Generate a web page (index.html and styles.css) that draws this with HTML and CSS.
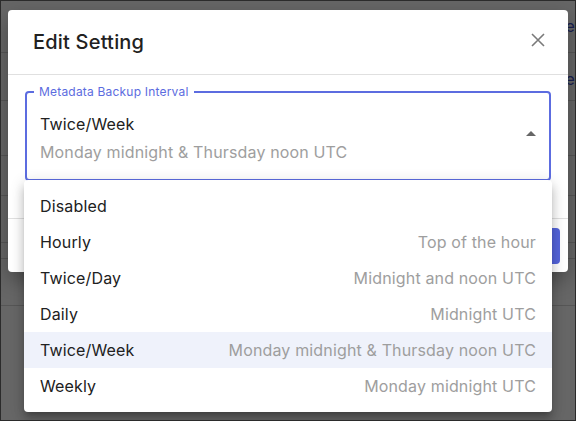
FILE: index.html
```html
<!DOCTYPE html>
<html>
<head>
<meta charset="utf-8">
<link rel="stylesheet" href="styles.css">
</head>
<body>
<div class="screen">
  <div class="page">
    <div class="row r1"><span class="link">e</span></div>
    <div class="row r2"><span class="link">e</span></div>
    <div class="row r3"></div>
    <div class="row r4"></div>
    <div class="row r5"></div>
    <div class="row r6"></div>
    <div class="row r7"></div>
  </div>
  <div class="backdrop"></div>

  <div class="dialog">
    <div class="dialog-header">
      <h2 class="dialog-title">Edit Setting</h2>
      <svg class="close" width="14" height="14" viewBox="0 0 14 14">
        <path d="M1 1 L13 13 M13 1 L1 13" stroke="#7a7a7a" stroke-width="1.6" fill="none"/>
      </svg>
    </div>
    <div class="dialog-body">
      <div class="field">
        <span class="field-label">Metadata Backup Interval</span>
        <div class="field-text">
          <div class="field-value">Twice/Week</div>
          <div class="field-sub">Monday midnight &amp; Thursday noon UTC</div>
        </div>
        <span class="caret"></span>
      </div>
    </div>
    <div class="dialog-footer">
      <div class="btn"></div>
    </div>
  </div>

  <div class="menu">
    <div class="item"><span class="name">Disabled</span><span class="desc"></span></div>
    <div class="item"><span class="name">Hourly</span><span class="desc">Top of the hour</span></div>
    <div class="item"><span class="name">Twice/Day</span><span class="desc">Midnight and noon UTC</span></div>
    <div class="item"><span class="name">Daily</span><span class="desc">Midnight UTC</span></div>
    <div class="item selected"><span class="name">Twice/Week</span><span class="desc">Monday midnight &amp; Thursday noon UTC</span></div>
    <div class="item"><span class="name">Weekly</span><span class="desc">Monday midnight UTC</span></div>
  </div>
</div>
</body>
</html>
```

FILE: styles.css
```css
* { box-sizing: border-box; }
html, body { margin: 0; padding: 0; }
body {
  font-family: Inter, "Noto Sans", "Liberation Sans", sans-serif;
  letter-spacing: 0.15px;
  width: 576px;
  height: 421px;
  overflow: hidden;
}
.screen {
  position: relative;
  width: 576px;
  height: 421px;
  background: #ffffff;
  border: 1px solid #2b2b2b;
  overflow: hidden;
}
.page { display: flex; flex-direction: column; }
.row {
  border-bottom: 1px solid #d6d6d6;
  display: flex;
  justify-content: flex-end;
  align-items: center;
  font-size: 16px;
}
.r1 { height: 52px; align-items: flex-end; }
.r2 { height: 48px; align-items: flex-start; }
.r3 { height: 55px; }
.r4 { height: 40px; }
.r5 { height: 47px; }
.r6 { height: 16px; }
.r7 { height: 47px; }
.link { color: #3f51c8; margin-right: 0; line-height: 20px; }
.r1 .link { margin-bottom: 16px; }
.r2 .link { margin-top: 16px; }
.backdrop {
  position: absolute;
  inset: 0;
  background: rgba(0, 0, 0, 0.6);
}
.dialog {
  position: absolute;
  left: 7px;
  top: 9px;
  width: 560px;
  height: 262px;
  background: #fff;
  border-radius: 4px;
  display: flex;
  flex-direction: column;
  box-shadow: 0 8px 20px rgba(0,0,0,0.3);
}
.dialog-header {
  height: 65px;
  border-bottom: 1px solid #e0e0e0;
  display: flex;
  align-items: center;
  justify-content: space-between;
  padding: 0 23px 0 25px;
}
.dialog-title {
  margin: 0;
  font-size: 20px;
  font-weight: 500;
  color: #212121;
  letter-spacing: 0.2px;
}
.close { margin-top: -4px; }
.dialog-body {
  padding: 16px 17px 0 17px;
  height: 144px;
  border-bottom: 1px solid #e0e0e0;
}
.field {
  position: relative;
  height: 90px;
  border: 2px solid #5c6ce0;
  border-radius: 4px;
  display: flex;
  align-items: center;
  padding: 0 13px;
}
.field-label {
  position: absolute;
  top: -9px;
  left: 7px;
  padding: 0 5px 0 5px;
  background: #fff;
  color: #5c6ce0;
  font-size: 12px;
  line-height: 16px;
  letter-spacing: 0.2px;
}
.field-text { flex: 1; margin-top: 6px; }
.field-value { font-size: 16px; color: #212121; line-height: 26px; }
.field-sub { font-size: 16px; color: #9e9e9e; line-height: 30px; }
.caret {
  width: 0; height: 0;
  border-left: 5px solid transparent;
  border-right: 5px solid transparent;
  border-bottom: 5px solid #666;
  margin-right: 0;
  margin-top: -6px;
}
.dialog-footer {
  flex: 1;
  display: flex;
  align-items: center;
  justify-content: flex-end;
  padding: 0 8px;
}
.btn {
  width: 90px;
  height: 36px;
  background: #5464dc;
  border-radius: 4px;
}
.menu {
  position: absolute;
  left: 23px;
  top: 179px;
  width: 528px;
  padding: 8px 0;
  background: #fff;
  border-radius: 4px;
  box-shadow: 0 5px 5px -3px rgba(0,0,0,0.2), 0 8px 10px 1px rgba(0,0,0,0.14), 0 3px 14px 2px rgba(0,0,0,0.12);
}
.item {
  height: 36px;
  display: flex;
  align-items: center;
  justify-content: space-between;
  padding: 0 16px;
  font-size: 16px;
}
.item.selected { background: #eff2fb; }
.name { color: #212121; }
.desc { color: #9e9e9e; }
```
